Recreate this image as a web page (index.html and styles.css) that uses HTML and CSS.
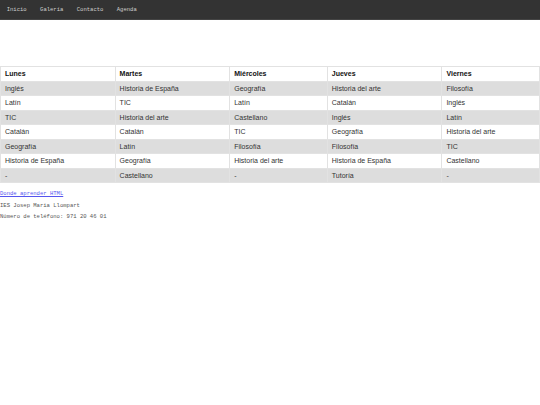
FILE: index.html
```html
<!DOCTYPE html>
<html lang="es">
<head>
<meta charset="utf-8">
<title>Horario</title>
<link rel="stylesheet" href="styles.css">
</head>
<body>
<nav class="nav">
  <a href="#">Inicio</a>
  <a href="#">Galería</a>
  <a href="#">Contacto</a>
  <a href="#">Agenda</a>
</nav>
<main class="main">
  <table class="horario">
    <tr><th>Lunes</th><th>Martes</th><th>Miércoles</th><th>Jueves</th><th>Viernes</th></tr>
    <tr><td>Inglés</td><td>Historia de España</td><td>Geografía</td><td>Historia del arte</td><td>Filosofía</td></tr>
    <tr><td>Latín</td><td>TIC</td><td>Latín</td><td>Catalán</td><td>Inglés</td></tr>
    <tr><td>TIC</td><td>Historia del arte</td><td>Castellano</td><td>Inglés</td><td>Latín</td></tr>
    <tr><td>Catalán</td><td>Catalán</td><td>TIC</td><td>Geografía</td><td>Historia del arte</td></tr>
    <tr><td>Geografía</td><td>Latín</td><td>Filosofía</td><td>Filosofía</td><td>TIC</td></tr>
    <tr><td>Historia de España</td><td>Geografía</td><td>Historia del arte</td><td>Historia de España</td><td>Castellano</td></tr>
    <tr><td>-</td><td>Castellano</td><td>-</td><td>Tutoría</td><td>-</td></tr>
  </table>
  <footer class="footer">
    <a class="link" href="#">Donde aprender HTML</a>
    <p>IES Josep Maria Llompart</p>
    <p>Número de teléfono: 971 20 46 01</p>
  </footer>
</main>
</body>
</html>
```
FILE: styles.css
```css
html, body {
  margin: 0;
  padding: 0;
  background: #fff;
}
.nav {
  background: #333;
  height: 20px;
  display: flex;
  align-items: center;
  border-bottom: 1px solid #444;
  box-sizing: border-box;
}
.nav a {
  font-family: "Liberation Mono", monospace;
  font-size: 5.55px;
  color: #cfcfcf;
  text-decoration: none;
  padding: 0 6.7px;
}
.main {
  padding-top: 46px;
}
.horario {
  width: 100%;
  border-collapse: collapse;
  font-family: "Liberation Sans", Arial, sans-serif;
  font-size: 7px;
  color: #333;
}
.horario th, .horario td {
  border: 1px solid #e2e2e2;
  text-align: left;
  padding: 3px 4px;
  line-height: 7.5px;
}
.horario th {
  font-weight: bold;
  color: #111;
}
.horario tr:nth-child(even) {
  background: #dddddd;
}
.footer {
  display: flex;
  flex-direction: column;
  align-items: flex-start;
  gap: 5px;
  padding-top: 8px;
  font-family: "Liberation Mono", monospace;
  font-size: 5.55px;
  line-height: 6.5px;
  color: #555;
}
.footer p {
  margin: 0;
}
.link {
  color: #5555ee;
  text-decoration: underline;
}
```
